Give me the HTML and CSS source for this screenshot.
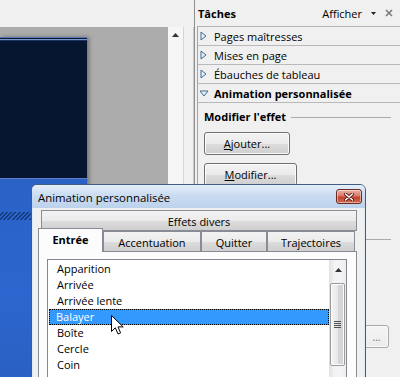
FILE: index.html
```html
<!DOCTYPE html>
<html lang="fr">
<head>
<meta charset="utf-8">
<title>Animation personnalisée</title>
<link rel="stylesheet" href="styles.css">
</head>
<body>
<div class="app">
  <div class="main">
    <div class="toolbar"></div>
    <div class="work">
      <div class="canvas">
        <div class="slide">
          <div class="slide-top"></div>
          <div class="slide-bottom"><div class="hatch"></div></div>
        </div>
      </div>
      <div class="vscroll">
        <svg class="vs-arrow" width="7" height="4" viewBox="0 0 7 4"><path d="M0 4 L3.5 0 L7 4 Z" fill="#333"/></svg>
      </div>
      <div class="splitter"></div>
    </div>
  </div>
  <div class="pane">
    <div class="pane-head">
      <span class="pane-title">Tâches</span>
      <span class="pane-show">Afficher</span>
      <svg class="pane-drop" width="5" height="3" viewBox="0 0 5 3"><path d="M0 0 H5 L2.5 3 Z" fill="#222"/></svg>
      <svg class="pane-close" width="8" height="8" viewBox="0 0 8 8"><path d="M1 1 L7 7 M7 1 L1 7" stroke="#7a7a7a" stroke-width="1.6"/></svg>
    </div>
    <div class="pane-box">
      <div class="prow">
        <svg class="tri" width="7" height="10" viewBox="0 0 7 10"><path d="M1 1 L6 5 L1 9 Z" fill="#e6eef7" stroke="#3f6a93" stroke-width="1"/></svg>
        <span>Pages maîtresses</span>
      </div>
      <div class="prow">
        <svg class="tri" width="7" height="10" viewBox="0 0 7 10"><path d="M1 1 L6 5 L1 9 Z" fill="#e6eef7" stroke="#3f6a93" stroke-width="1"/></svg>
        <span>Mises en page</span>
      </div>
      <div class="prow">
        <svg class="tri" width="7" height="10" viewBox="0 0 7 10"><path d="M1 1 L6 5 L1 9 Z" fill="#e6eef7" stroke="#3f6a93" stroke-width="1"/></svg>
        <span>Ébauches de tableau</span>
      </div>
      <div class="prow open">
        <svg class="tri" width="10" height="7" viewBox="0 0 10 7"><path d="M1 1 L9 1 L5 6 Z" fill="#e6eef7" stroke="#3f6a93" stroke-width="1"/></svg>
        <span>Animation personnalisée</span>
      </div>
      <div class="pane-content">
        <div class="group"><span>Modifier l'effet</span><i class="rule"></i></div>
        <div class="btnrow"><button class="btn b-add"><u>A</u>jouter...</button></div>
        <div class="btnrow"><button class="btn b-mod"><u>M</u>odifier...</button></div>
        <div class="sep"></div>
        <div class="btnrow right"><button class="btn b-more">...</button></div>
      </div>
    </div>
  </div>
</div>

<div class="dialog">
  <div class="dlg-title">
    <span>Animation personnalisée</span>
    <span class="dlg-close">
      <svg width="10" height="8" viewBox="0 0 10 8"><path d="M1.5 1 L8.5 7 M8.5 1 L1.5 7" stroke="#4a1410" stroke-width="3.2" stroke-linecap="round"/><path d="M1.5 1 L8.5 7 M8.5 1 L1.5 7" stroke="#fff" stroke-width="1.6" stroke-linecap="round"/></svg>
    </span>
  </div>
  <div class="dlg-body">
    <div class="tabs">
      <div class="tabrow r1"><div class="tab t-effets">Effets divers</div></div>
      <div class="tabrow r2">
        <div class="tab sel t-entree">Entrée</div>
        <div class="tab t-accent">Accentuation</div>
        <div class="tab t-quit">Quitter</div>
        <div class="tab t-traj">Trajectoires</div>
      </div>
    </div>
    <div class="panel">
      <div class="listbox">
        <ul class="items">
          <li>Apparition</li>
          <li>Arrivée</li>
          <li>Arrivée lente</li>
          <li class="selected">Balayer</li>
          <li>Boîte</li>
          <li>Cercle</li>
          <li>Coin</li>
          <li>Fondu</li>
        </ul>
        <div class="lscroll">
          <div class="ls-up"><svg width="7" height="4" viewBox="0 0 7 4"><path d="M0 4 L3.5 0 L7 4 Z" fill="#333"/></svg></div>
          <div class="ls-thumb"><span class="grip"></span></div>
        </div>
      </div>
    </div>
  </div>
</div>

<svg class="cursor" width="13" height="21" viewBox="0 0 13 21">
  <path d="M0.5 0.5 L0.5 16.5 L4.3 12.8 L7 19 L9.6 17.9 L7 11.9 L12.2 11.9 Z" fill="#fff" stroke="#000" stroke-width="1" stroke-linejoin="round"/>
</svg>
</body>
</html>
```

FILE: styles.css
```css
* { box-sizing: border-box; }
html, body { margin: 0; padding: 0; }
body {
  width: 400px;
  height: 377px;
  overflow: hidden;
  position: relative;
  background: #f0f0f0;
  font-family: "Open Sans", "Noto Sans", sans-serif;
  font-size: 11px;
  color: #000;
}

.app { display: flex; width: 404px; height: 377px; }

/* ---- left work area ---- */
.main { width: 194px; display: flex; flex-direction: column; }
.toolbar { height: 27px; background: #f0f0f0; }
.work { flex: 1; display: flex; }
.canvas { width: 168px; background: #acacac; }
.slide {
  width: 87px;
  margin-top: 10px;
  height: 340px;
  display: flex;
  flex-direction: column;
  box-shadow: 2px 0 4px rgba(0,0,0,0.35);
}
.slide-top {
  height: 141px;
  background:
    linear-gradient(#5a78b0 0 1px, #0a1a3a 1px 2px, #7b96c8 2px 3px, #1c3260 3px 4px, transparent 4px),
    #061530;
}
.slide-bottom {
  flex: 1;
  border-top: 1px solid #5b80c8;
  background: linear-gradient(#2a62c6, #2c67cf 60%, #2a60c2);
  padding-top: 33px;
}
.hatch {
  height: 8px;
  width: 100%;
  background: repeating-linear-gradient(135deg, transparent 0 1.6px, #183a7e 1.6px 3px);
}
.vscroll {
  width: 16px;
  background: #f6f6f6;
  border-right: 1px solid #d6d6d6;
  display: flex;
  justify-content: center;
  padding-top: 6px;
}
.vs-arrow { display: block; }
.splitter { width: 10px; background: #f0f0f0; border-right: 1px solid #c9c9c9; }

/* ---- task pane ---- */
.pane { flex: 1; border-left: 1px solid #8f8f8f; display: flex; flex-direction: column; }
.pane-head {
  height: 26px;
  display: flex;
  align-items: center;
  padding-left: 3px;
}
.pane-title { font-weight: bold; }
.pane-show { margin-left: auto; }
.pane-drop { margin-left: 9px; }
.pane-close { margin-left: 9px; margin-right: 11px; }

.pane-box {
  flex: 1;
  margin-left: 2px;
  border-left: 1px solid #a3a3a3;
  border-top: 1px solid #b4b4b4;
}
.prow {
  height: 19px;
  border-bottom: 1px solid #b9b9b9;
  display: flex;
  align-items: center;
  padding-left: 2px;
  gap: 7px;
}
.prow .tri { display: block; }
.prow.open { gap: 5px; padding-left: 1px; }
.prow.open span { font-weight: bold; }

.pane-content { padding: 6px 13px 0 6px; }
.group { display: flex; align-items: center; height: 15px; }
.group span { font-weight: bold; }
.group .rule { flex: 1; height: 1px; background: #a9a9a9; margin-left: 5px; margin-top: 1px; }

.btnrow { display: flex; }
.btnrow.right { justify-content: flex-end; }
.btn {
  font: inherit;
  color: #000;
  height: 23px;
  border: 1px solid #707070;
  border-radius: 3px;
  background: linear-gradient(#f2f2f2 0%, #ebebeb 50%, #dddddd 50%, #cfcfcf 100%);
  box-shadow: inset 0 0 0 1px #fbfbfb;
  padding: 0;
  margin: 0;
}
.b-add { width: 86px; margin-top: 8px; }
.b-mod { width: 93px; margin-top: 8px; }
.sep { height: 1px; background: #a9a9a9; margin-top: 53px; }
.b-more {
  width: 25px;
  margin-top: 85px;
  margin-right: 2px;
  color: #6a6a6a;
  font-size: 10px;
  background: linear-gradient(#f4f4f4, #ececec);
  border-color: #a8a8a8;
}

/* ---- dialog ---- */
.dialog {
  position: absolute;
  left: 31px;
  top: 184px;
  width: 335px;
  height: 200px;
  border: 1px solid #3f5d80;
  border-radius: 6px 6px 0 0;
  background: #f0f0f0;
  box-shadow: inset 1px 0 0 #dfe9f5, inset -1px 0 0 #dfe9f5;
}
.dlg-title {
  height: 23px;
  border-radius: 5px 5px 0 0;
  background: linear-gradient(#e4eefa 0%, #cadcf1 45%, #bcd2ec 100%);
  display: flex;
  align-items: center;
  padding-left: 6px;
  padding-top: 1px;
  font-size: 11.4px;
}
.dlg-close {
  margin-left: auto;
  margin-right: 3px;
  align-self: flex-start;
  margin-top: 3px;
  width: 26px;
  height: 15px;
  border: 1px solid #6b2a22;
  border-radius: 3px;
  background: linear-gradient(#eab3a8 0%, #d9796a 45%, #c4412f 55%, #d06a52 100%);
  box-shadow: inset 0 0 0 1px rgba(255,255,255,0.45);
  display: flex;
  align-items: center;
  justify-content: center;
}
.dlg-close svg { display: block; }

.dlg-body { padding: 2px 8px 0 6px; }
.tabs { display: flex; flex-direction: column; }
.tabrow { display: flex; }
.tab {
  border: 1px solid #898c95;
  background: linear-gradient(#f2f2f2 0%, #ebebeb 50%, #dddddd 50%, #cfcfcf 100%);
  display: flex;
  align-items: center;
  justify-content: center;
  white-space: nowrap;
}
.r1 .tab { height: 21px; width: 316px; margin-left: 3px; padding-top: 1px; }
.r2 .tab { height: 20px; border-bottom: none; padding-top: 1px; }
.r2 .tab.sel {
  height: 24px;
  margin-top: -3px;
  margin-bottom: -1px;
  background: #fcfcfc;
  font-weight: bold;
  position: relative;
  z-index: 1;
  padding-top: 0;
  padding-bottom: 2px;
}
.t-entree { width: 65px; }
.t-accent { width: 98px; }
.t-quit { width: 66px; }
.t-traj { width: 88px; }

.panel {
  height: 140px;
  width: 319px;
  border: 1px solid #898c95;
  background: #fcfcfc;
  padding: 7px 0 0 8px;
}
.listbox {
  width: 300px;
  height: 130px;
  border: 1px solid #828790;
  background: #fff;
  display: flex;
}
.items {
  list-style: none;
  margin: 0;
  padding: 1px 0 0 0;
  flex: 1;
}
.items li {
  height: 16px;
  line-height: 16px;
  padding-left: 8px;
  margin-left: 1px;
  white-space: nowrap;
}
.items li.selected {
  background: #3399ff;
  color: #fff;
  outline: 1px dotted #000;
  outline-offset: -1px;
  padding-left: 7px;
}
.lscroll {
  width: 17px;
  background: linear-gradient(to right, #e6e6e6, #f4f4f4 30%, #f4f4f4 70%, #ececec);
  border-left: 1px solid #e0e0e0;
}
.ls-up {
  height: 17px;
  display: flex;
  align-items: center;
  justify-content: center;
  padding-top: 2px;
}
.ls-up svg { display: block; }
.ls-thumb {
  margin: 6px 1px 0 0;
  height: 83px;
  border: 1px solid #9b9b9b;
  border-radius: 2px;
  background: linear-gradient(to right, #f4f4f4, #e8e8e8 50%, #d7d7d7 51%, #d2d2d2);
  box-shadow: inset 0 0 0 1px #fbfbfb;
  display: flex;
  align-items: center;
  justify-content: center;
}
.grip {
  width: 7px;
  height: 7px;
  background: repeating-linear-gradient(#505050 0 1px, transparent 1px 2px);
}

.cursor { position: absolute; left: 111px; top: 315px; }
```
